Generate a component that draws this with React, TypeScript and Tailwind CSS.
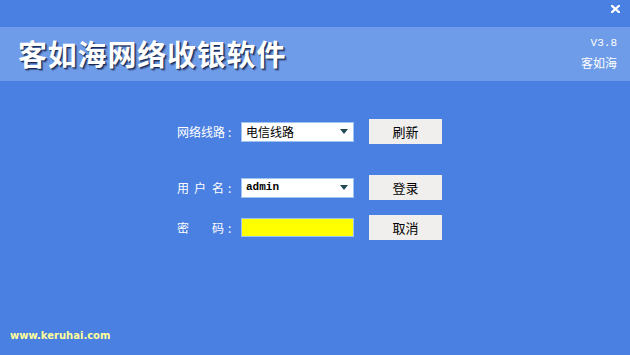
import React from "react";

const cjk = { fontFamily: '"Noto Sans CJK SC", "Noto Sans", sans-serif' };

function Arrow() {
  return (
    <svg width="8" height="5" viewBox="0 0 8 5" className="shrink-0">
      <polygon points="0,0 8,0 4,5" fill="#1f4a55" />
    </svg>
  );
}

function Select({ children, mono }: { children: React.ReactNode; mono?: boolean }) {
  return (
    <div className="w-[113px] h-[20px] bg-white border border-[#9cc4ee] flex items-center justify-between pl-[4px] pr-[5px]">
      <span
        className={mono ? "text-[11px] text-black font-semibold" : "text-[12px] text-black"}
        style={mono ? { fontFamily: '"Liberation Mono", monospace' } : cjk}
      >
        {children}
      </span>
      <Arrow />
    </div>
  );
}

function Btn({ children }: { children: React.ReactNode }) {
  return (
    <div
      className="w-[73px] h-[25px] bg-[#f0efed] flex items-center justify-center text-[13px] text-black"
      style={cjk}
    >
      {children}
    </div>
  );
}

function Label({ parts }: { parts: [string, number][] }) {
  return (
    <div className="w-[64px] flex whitespace-nowrap text-white text-[12px] leading-none" style={cjk}>
      {parts.map(([t, w], i) => (
        <span key={i} className="inline-block" style={{ width: w }}>
          {t}
        </span>
      ))}
    </div>
  );
}

export default function App() {
  return (
    <div className="w-[630px] h-[355px] bg-[#4a80e2] flex flex-col relative overflow-hidden">
      <div className="h-[27px] flex justify-end items-start pr-[10px] pt-[5px]">
        <svg width="9" height="8" viewBox="0 0 9 8">
          <path d="M1 0.8 L8 7.2 M8 0.8 L1 7.2" stroke="white" strokeWidth="2.2" strokeLinecap="square" />
        </svg>
      </div>
      <div className="h-[54px] bg-[#6f9ce8] flex items-center justify-between pl-[18px] pr-[13px]">
        <div
          className="text-white text-[29px] font-bold tracking-[0.8px] leading-none mt-[-1px]"
          style={{ ...cjk, textShadow: "1px 1px 0 #1a2c55, 2px 2px 1px rgba(20,30,70,0.5)" }}
        >
          客如海网络收银软件
        </div>
        <div className="flex flex-col items-end gap-[8px] mt-[-1px]">
          <span className="text-white text-[11px] leading-none" style={{ fontFamily: '"Liberation Mono", monospace' }}>
            V3.8
          </span>
          <span className="text-white text-[12px] leading-none" style={cjk}>
            客如海
          </span>
        </div>
      </div>
      <div className="flex-1 pt-[38px] pl-[177px] flex flex-col">
        <div className="flex items-center h-[25px]">
          <Label parts={[["网络线路", 51], [":", 10]]} />
          <Select>电信线路</Select>
          <div className="w-[15px]" />
          <Btn>刷新</Btn>
        </div>
        <div className="flex items-center h-[25px] mt-[31px]">
          <Label parts={[["用", 17], ["户", 18], ["名", 16], [":", 10]]} />
          <Select mono>admin</Select>
          <div className="w-[15px]" />
          <Btn>登录</Btn>
        </div>
        <div className="flex items-center h-[25px] mt-[15px]">
          <Label parts={[["密", 35], ["码", 16], [":", 10]]} />
          <div className="w-[113px] h-[19px] bg-[#ffff00] border border-[#9cc4ee]" />
          <div className="w-[15px]" />
          <Btn>取消</Btn>
        </div>
      </div>
      <div className="h-[24px] pl-[10px] flex items-start leading-none">
        <span className="text-[#ffff99] text-[10px] font-bold leading-none" style={{ fontFamily: '"DejaVu Sans", sans-serif' }}>
          www.keruhai.com
        </span>
      </div>
    </div>
  );
}
